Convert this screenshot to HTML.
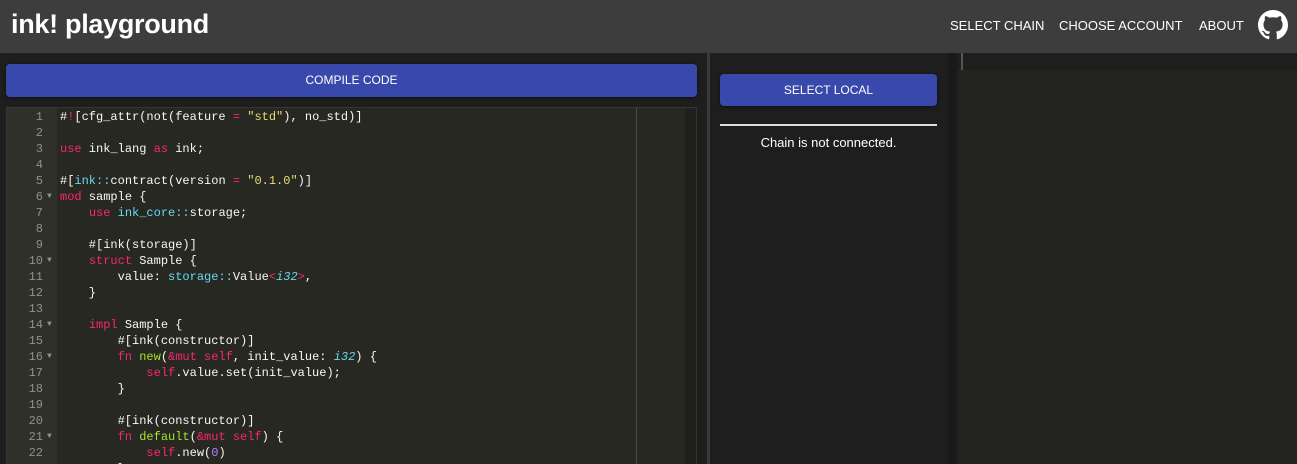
<!DOCTYPE html>
<html><head><meta charset="utf-8"><style>
*{margin:0;padding:0;box-sizing:border-box}
body{width:1297px;height:464px;overflow:hidden;background:#1e1e1e;font-family:"Liberation Sans",sans-serif;position:relative}
.hdr{position:absolute;left:0;top:0;width:1297px;height:53px;background:#3d3d3d}
.title{position:absolute;left:11px;top:9px;color:#fff;font-weight:bold;font-size:27px;letter-spacing:-0.3px}
.nav{position:absolute;top:18px;color:#fff;font-size:13px}
.btn{position:absolute;background:#3949ab;color:#fff;font-size:12px;text-align:center;border-radius:4px;box-shadow:0 1px 3px rgba(0,0,0,.5)}
.ed{position:absolute;left:6px;top:107px;width:691px;height:357px;background:#272822;border:1px solid #34352f;border-bottom:none;overflow:hidden}
.gut{position:absolute;left:0;top:0;width:50px;height:100%;background:#2f3129}
.lines{position:absolute;left:0;top:1px;font-family:"Liberation Mono",monospace;font-size:12px;line-height:16px}
.ln{position:absolute;left:0;top:0;width:36px;text-align:right;color:#8f908a;white-space:pre}
.code{position:absolute;left:53px;top:0;color:#f8f8f2;white-space:pre}
.k{color:#f92672}.s{color:#e6db74}.t{color:#66d9ef}.i{color:#66d9ef;font-style:italic}.f{color:#a6e22e}.n{color:#ae81ff}
.arr{position:absolute;left:40px;color:#8f908a;font-size:8px;line-height:16px}
</style></head><body>
<div class="hdr">
<div class="title">ink! playground</div>
<div class="nav" style="left:950px">SELECT CHAIN</div>
<div class="nav" style="left:1059px">CHOOSE ACCOUNT</div>
<div class="nav" style="left:1199px">ABOUT</div>
<svg style="position:absolute;left:1258px;top:10px" width="30" height="30" viewBox="0 0 16 16"><path fill="#fff" d="M8 0C3.58 0 0 3.580 0 8c0 3.54 2.29 6.53 5.47 7.59.4.07.55-.17.55-.38 0-.19-.01-.82-.01-1.49-2.01.37-2.530-.49-2.690-.94-.09-.23-.48-.94-.82-1.13-.28-.15-.68-.52-.01-.53.63-.01 1.08.58 1.23.82.72 1.21 1.87.87 2.33.66.07-.52.28-.87.51-1.07-1.78-.2-3.64-.89-3.64-3.95 0-.87.31-1.59.82-2.15-.08-.2-.36-1.02.08-2.12 0 0 .67-.21 2.2.82.64-.18 1.32-.27 2-.27.68 0 1.36.09 2 .27 1.53-1.04 2.2-.82 2.2-.82.44 1.1.16 1.92.08 2.12.51.56.82 1.27.82 2.15 0 3.07-1.87 3.75-3.65 3.95.29.25.54.73.54 1.48 0 1.07-.01 1.93-.01 2.2 0 .21.15.46.55.38A8.013 8.013 0 0016 8c0-4.42-3.58-8-8-8z"/></svg>
</div>
<div class="btn" style="left:6px;top:64px;width:691px;height:33px;line-height:33px">COMPILE CODE</div>
<div style="position:absolute;left:707px;top:53px;width:3px;height:411px;background:#3a3a3a"></div>
<div style="position:absolute;left:948px;top:53px;width:9px;height:411px;background:#1a1a1a"></div>
<div style="position:absolute;left:961px;top:53px;width:2px;height:17px;background:#555"></div>
<div style="position:absolute;left:957px;top:70px;width:340px;height:394px;background:#23241f"></div>
<div class="btn" style="left:720px;top:74px;width:217px;height:32px;line-height:32px">SELECT LOCAL</div>
<div style="position:absolute;left:720px;top:124px;width:217px;height:2px;background:#ddd"></div>
<div style="position:absolute;left:720px;top:135px;width:217px;text-align:center;color:#fff;font-size:13px">Chain is not connected.</div>
<div class="ed">
<div class="gut"></div>
<div style="position:absolute;left:629px;top:0;width:1px;height:100%;background:#4a4b45"></div>
<div style="position:absolute;left:678px;top:0;width:13px;height:100%;background:#1f201c"></div>
<div class="lines"><div class="ln">1
2
3
4
5
6
7
8
9
10
11
12
13
14
15
16
17
18
19
20
21
22</div><div class="arr" style="top:80px">▼</div><div class="arr" style="top:144px">▼</div><div class="arr" style="top:208px">▼</div><div class="arr" style="top:240px">▼</div><div class="arr" style="top:320px">▼</div><div class="code">#<span class="k">!</span>[cfg_attr(not(feature <span class="k">=</span> <span class="s">"std"</span>), no_std)]

<span class="k">use</span> ink_lang <span class="k">as</span> ink;

#[<span class="t">ink::</span>contract(version <span class="k">=</span> <span class="s">"0.1.0"</span>)]
<span class="k">mod</span> sample {
    <span class="k">use</span> <span class="t">ink_core::</span>storage;

    #[ink(storage)]
    <span class="k">struct</span> Sample {
        value: <span class="t">storage::</span>Value<span class="k">&lt;</span><span class="i">i32</span><span class="k">&gt;</span>,
    }

    <span class="k">impl</span> Sample {
        #[ink(constructor)]
        <span class="k">fn</span> <span class="f">new</span>(<span class="k">&amp;mut</span> <span class="k">self</span>, init_value: <span class="i">i32</span>) {
            <span class="k">self</span>.value.set(init_value);
        }

        #[ink(constructor)]
        <span class="k">fn</span> <span class="f">default</span>(<span class="k">&amp;mut</span> <span class="k">self</span>) {
            <span class="k">self</span>.new(<span class="n">0</span>)
        }</div></div>
</div>
</body></html>
